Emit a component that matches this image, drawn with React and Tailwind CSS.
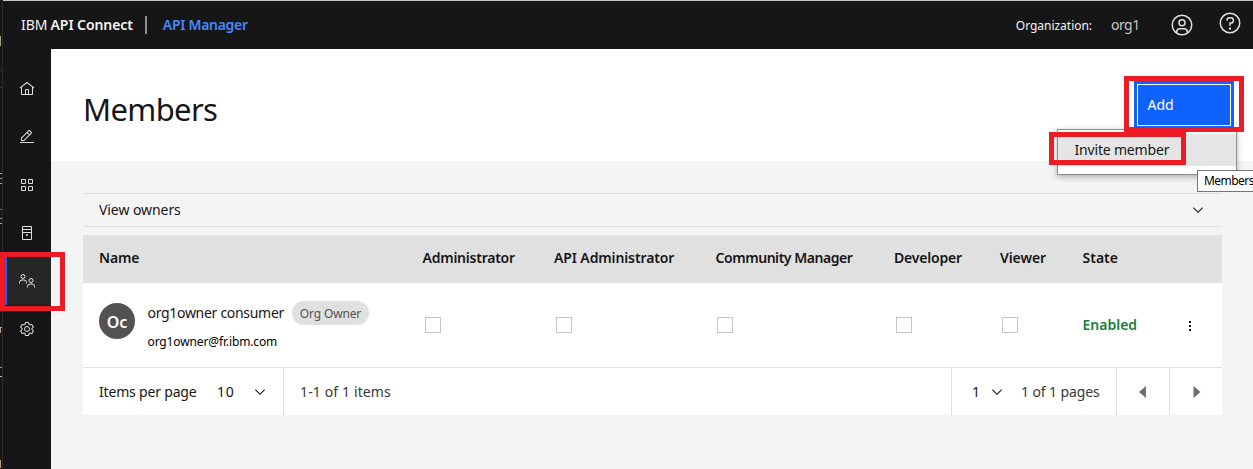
import React from 'react'

const GEAR =
  'M27,16.76c0-.25,0-.5,0-.76s0-.51,0-.77l1.92-1.68A2,2,0,0,0,29.3,11L26.94,7a2,2,0,0,0-1.73-1,2,2,0,0,0-.64.1l-2.43.82a11.35,11.35,0,0,0-1.31-.75l-.51-2.52a2,2,0,0,0-2-1.61H13.64a2,2,0,0,0-2,1.61l-.51,2.52a11.48,11.48,0,0,0-1.32.75L7.43,6.06A2,2,0,0,0,6.79,6,2,2,0,0,0,5.06,7L2.7,11a2,2,0,0,0,.41,2.51L5,15.24c0,.25,0,.5,0,.76s0,.51,0,.77L3.11,18.45A2,2,0,0,0,2.7,21L5.06,25a2,2,0,0,0,1.73,1,2,2,0,0,0,.64-.1l2.43-.82a11.35,11.35,0,0,0,1.31.75l.51,2.52a2,2,0,0,0,2,1.61h4.72a2,2,0,0,0,2-1.61l.51-2.52a11.48,11.48,0,0,0,1.32-.75l2.42.82a2,2,0,0,0,.64.1,2,2,0,0,0,1.73-1L29.3,21a2,2,0,0,0-.41-2.51ZM25.21,24l-3.43-1.16a8.86,8.86,0,0,1-2.71,1.57L18.36,28H13.64l-.71-3.55a9.36,9.36,0,0,1-2.7-1.57L6.79,24,4.43,20l2.72-2.4a8.9,8.9,0,0,1,0-3.13L4.43,12,6.79,8l3.43,1.16a8.86,8.86,0,0,1,2.71-1.57L13.64,4h4.72l.71,3.55a9.36,9.36,0,0,1,2.7,1.57L25.21,8,27.57,12l-2.72,2.4a8.9,8.9,0,0,1,0,3.13L27.57,20Z'

function Icon({ className = 'size-4', children }) {
  return (
    <svg viewBox="0 0 32 32" fill="currentColor" className={`shrink-0 ${className}`}>
      {children}
    </svg>
  )
}

const HomeIcon = () => (
  <Icon>
    <path d="M16.6123,2.2138a1.01,1.01,0,0,0-1.2427,0L1,13.4194l1.2427,1.5717L4,13.6209V26a2.0041,2.0041,0,0,0,2,2H26a2.0037,2.0037,0,0,0,2-2V13.63L29.7573,15,31,13.4282ZM18,26H14V18h4Zm2,0V18a2.0023,2.0023,0,0,0-2-2H14a2.002,2.002,0,0,0-2,2v8H6V12.0615l10-7.79,10,7.8005V26Z" />
  </Icon>
)
const EditIcon = () => (
  <Icon>
    <path d="M2 26H30V28H2z M25.4,9c0.8-0.8,0.8-2,0-2.8l-3.6-3.6c-0.8-0.8-2-0.8-2.8,0l-15,15V24h6.4L25.4,9z M20.4,4L24,7.6l-3,3L17.4,7L20.4,4z M6,22v-3.6l10-10l3.6,3.6l-10,10H6z" />
  </Icon>
)
const GridIcon = () => (
  <Icon>
    <g fill="none" stroke="currentColor" strokeWidth="2">
      <path d="M5 5h8v8H5z M19 5h8v8h-8z M5 19h8v8H5z M19 19h8v8h-8z" />
    </g>
  </Icon>
)
const CatalogIcon = () => (
  <Icon>
    <path d="M7 3h18v26H7z M7 9h18 M7 15h18" fill="none" stroke="currentColor" strokeWidth="2" />
    <circle cx="16" cy="20" r="2" />
  </Icon>
)
const MembersIcon = () => (
  <Icon>
    <g fill="none" stroke="currentColor" strokeWidth="2">
      <circle cx="8" cy="7" r="4" />
      <path d="M1 21v-2a5 5 0 0 1 5-5h4a5 5 0 0 1 5 5v2" />
      <circle cx="24" cy="15" r="4" />
      <path d="M17 29v-2a5 5 0 0 1 5-5h4a5 5 0 0 1 5 5v2" />
    </g>
  </Icon>
)
const SettingsIcon = () => (
  <Icon>
    <path d={GEAR} />
    <circle cx="16" cy="16" r="5" fill="none" stroke="currentColor" strokeWidth="2" />
  </Icon>
)
const Chevron = ({ className = '' }) => (
  <Icon className={`size-4 ${className}`}>
    <path d="M16 22L6 12 7.4 10.6 16 19.2 24.6 10.6 26 12z" />
  </Icon>
)

const nav = [HomeIcon, EditIcon, GridIcon, CatalogIcon, MembersIcon, SettingsIcon]

const columns = [
  ['Name', 'tracking-[-0.2px]'],
  ['Administrator', 'tracking-[-0.24px] pl-[0.5px]'],
  ['API Administrator', 'tracking-[-0.12px]'],
  ['Community Manager', 'tracking-[-0.45px] pl-[0.5px]'],
  ['Developer', 'tracking-[-0.2px]'],
  ['Viewer', 'tracking-[-0.1px]'],
  ['State', 'pl-[0.5px]'],
]

function Header() {
  return (
    <header className="flex h-[49px] shrink-0 items-center border-t border-[#c6c6c6] bg-[#161616] pl-[18px] text-sm text-[#f4f4f4]">
      <span>IBM</span>
      <span className="ml-[3px] font-semibold tracking-[-0.08px]">API Connect</span>
      <span className="ml-3 h-[18px] w-0.5 bg-[#8d8d8d]" />
      <span className="ml-4 font-semibold tracking-[-0.3px] text-[#4589ff]">API Manager</span>
      <span className="ml-auto pt-0.5 text-xs tracking-[-0.03px]">Organization:</span>
      <span className="ml-[19px] w-[30px] tracking-[-0.5px] text-[#c6c6c6]">org1</span>
      <Icon className="ml-[29px] size-6 text-[#e0e0e0]">
        <path d="M16,8a5,5,0,1,0,5,5A5,5,0,0,0,16,8Zm0,8a3,3,0,1,1,3-3A3.0034,3.0034,0,0,1,16,16Z" />
        <path d="M16,2A14,14,0,1,0,30,16,14.0158,14.0158,0,0,0,16,2ZM10,26.3765V25a3.0033,3.0033,0,0,1,3-3h6a3.0033,3.0033,0,0,1,3,3v1.3765a11.8989,11.8989,0,0,1-12,0Zm13.9925-1.4507A5.0016,5.0016,0,0,0,19,20H13a5.0016,5.0016,0,0,0-4.9925,4.9258,12,12,0,1,1,15.985,0Z" />
      </Icon>
      <Icon className="mr-[11px] mb-1 ml-6 size-6 text-[#e0e0e0]">
        <path d="M16,2A14,14,0,1,0,30,16,14,14,0,0,0,16,2Zm0,26A12,12,0,1,1,28,16,12,12,0,0,1,16,28Z" />
        <circle cx="16" cy="23.5" r="1.5" />
        <path d="M17,8H15.5A4.49,4.49,0,0,0,11,12.5V13h2v-.5A2.5,2.5,0,0,1,15.5,10H17a2.5,2.5,0,0,1,0,5H15v4.5h2V17a4.5,4.5,0,0,0,0-9Z" />
      </Icon>
    </header>
  )
}

function Sidebar() {
  return (
    <nav className="flex w-12 shrink-0 flex-col bg-[#161616] pt-4 text-[#e0e0e0]">
      {nav.map((Glyph, i) => (
        <div
          key={i}
          className={
            i === 4
              ? 'ml-0.5 flex h-12 items-center border-l-2 border-[#0f62fe] bg-[#262626] pl-3'
              : 'flex h-12 items-center pl-4'
          }
        >
          <Glyph />
        </div>
      ))}
    </nav>
  )
}

/* Strip of the neighbouring window visible along the left edge. */
function EdgeStrip() {
  return (
    <div className="flex w-[3px] shrink-0 flex-col border-r border-[#2b2b2b] bg-[#161616]">
      <span className="mt-9 h-2.5 w-px bg-[#b09a84]" />
      <span className="mt-6 h-px w-0.5 bg-[#303030]" />
      <span className="mt-4 h-px w-0.5 bg-[#303030]" />
      <span className="mt-[85px] h-px w-0.5 bg-[#b0a79c]" />
      <span className="mt-1 h-px w-0.5 bg-[#9aa3b0]" />
      <span className="mt-1 h-px w-0.5 bg-[#b0a79c]" />
      <span className="mt-[25px] h-px w-0.5 bg-[#4c6a8c]" />
      <span className="mt-2 h-px w-0.5 bg-[#8d9bb0]" />
      <span className="mt-1 h-px w-0.5 bg-[#b5b5b5]" />
      <span className="mt-[103px] h-px w-0.5 bg-[#b5a694]" />
      <span className="h-[5px] w-px bg-[#b09a84]" />
      <span className="mt-[34px] h-px w-0.5 bg-[#7aa0c0]" />
      <span className="mt-2 h-px w-0.5 bg-[#b5b5b5]" />
      <span className="mt-[83px] h-2 w-px bg-[#b09a84]" />
    </div>
  )
}

function MembersTable() {
  return (
    <section className="mt-2 text-sm">
      <div className="grid h-12 grid-cols-[323px_132px_161px_179px_106px_82px_1fr] items-center bg-[#e0e0e0] pb-0.5 pl-4 font-semibold">
        {columns.map(([label, tracking]) => (
          <span key={label} className={`whitespace-nowrap ${tracking}`}>
            {label}
          </span>
        ))}
      </div>
      <div className="grid h-[84px] grid-cols-[323px_132px_161px_179px_106px_82px_1fr] grid-rows-[84px] items-center bg-white pl-4">
        <div className="flex h-full items-start">
          <span className="mt-5 flex size-9 items-center justify-center rounded-full bg-[#525252] pt-0.5 text-base leading-none font-semibold text-white">
            Oc
          </span>
          <div className="ml-[12.5px] flex flex-col">
            <div className="mt-[18px] flex h-6 items-center">
              <span className="w-[136.5px] whitespace-nowrap tracking-[-0.3px]">org1owner consumer</span>
              <span className="ml-2 flex h-6 w-[77px] items-center justify-center rounded-full bg-[#e0e0e0] pt-0.5 text-xs tracking-[-0.15px] text-[#525252]">
                Org Owner
              </span>
            </div>
            <span className="mt-[9px] text-xs tracking-[-0.13px] text-black">org1owner@fr.ibm.com</span>
          </div>
        </div>
        {columns.slice(1, 6).map(([label], i) => (
          <span key={label} className={`size-4 border border-[#c6c6c6] ${i === 0 ? 'ml-[3px]' : 'ml-0.5'}`} />
        ))}
        <div className="flex items-center justify-between pr-6">
          <span className="pl-[0.5px] font-semibold text-[#198038]">Enabled</span>
          <Icon className="mt-0.5 size-4">
            <path d="M14 6h4v4h-4z M14 14h4v4h-4z M14 22h4v4h-4z" />
          </Icon>
        </div>
      </div>
      <div className="flex h-12 items-stretch border-t border-[#e0e0e0] bg-white">
        <div className="flex w-[201px] items-center border-r border-[#e0e0e0] pl-4">
          <span className="w-[118px] tracking-[-0.18px]">Items per page</span>
          <span className="tracking-[0.8px]">10</span>
          <Chevron className="ml-[17px]" />
        </div>
        <span className="self-center pl-4 tracking-[0.13px] text-[#393939]">1-1 of 1 items</span>
        <div className="ml-auto flex w-[166px] items-center border-r border-l border-[#e0e0e0] pl-5">
          <span>1</span>
          <Chevron className="ml-[9px]" />
          <span className="ml-4 whitespace-nowrap tracking-[-0.1px] text-[#393939]">1 of 1 pages</span>
        </div>
        <div className="flex w-[53px] items-center justify-center border-r border-[#e0e0e0] text-[#6f6f6f]">
          <Icon>
            <path d="M8 16L22 4v24z" />
          </Icon>
        </div>
        <div className="flex w-[52px] items-center justify-center text-[#6f6f6f]">
          <Icon>
            <path d="M25 16L11 4v24z" />
          </Icon>
        </div>
      </div>
    </section>
  )
}

function Overlays() {
  return (
    <>
      <div className="absolute top-[129px] left-[1057px] h-[46px] w-[180px] border border-[#8d8d8d] bg-white pt-1 shadow-[0_2px_6px_rgba(0,0,0,0.3)]">
        <div className="flex h-8 items-center bg-[#e5e5e5] pl-[16.5px] text-sm tracking-[-0.18px]">Invite member</div>
      </div>
      <div className="absolute top-[170px] left-[1197px] flex h-[22px] w-14 items-center border border-r-0 border-[#767676] bg-white pl-1.5 text-xs tracking-[-0.55px] text-black">
        Members
      </div>
      <div className="absolute top-[76px] left-[1124px] h-14 w-[120px] border-5 border-[#ed1c24]" />
      <div className="absolute top-[132px] left-[1049px] h-[33px] w-[137px] border-5 border-[#ed1c24]" />
      <div className="absolute top-[252px] left-0 h-[59px] w-[65px] border-5 border-[#ed1c24]" />
    </>
  )
}

export default function App() {
  return (
    <div className="relative flex h-[469px] w-[1253px] overflow-hidden bg-[#f4f4f4] font-['Noto_Sans',sans-serif] text-[#161616]">
      <EdgeStrip />
      <div className="flex min-w-0 flex-1 flex-col">
        <Header />
        <div className="flex min-h-0 flex-1">
          <Sidebar />
          <main className="min-w-0 flex-1">
            <div className="flex h-28 items-start justify-between bg-white pr-[19px] pl-8">
              <h1 className="mt-10 text-[31px] leading-10 tracking-[-0.65px]">Members</h1>
              <button className="mt-8 h-[47px] w-[100px] bg-[#0f62fe] p-[3px] text-left text-sm text-white">
                <span className="flex h-[42px] w-[94px] items-center border border-white pl-[9.5px]">Add</span>
              </button>
            </div>
            <div className="pt-8 pr-[31px] pl-8">
              <div className="flex h-[34px] items-center justify-between border-y border-[#e0e0e0] pr-4 pl-4 text-sm tracking-[-0.07px]">
                <span>View owners</span>
                <Chevron />
              </div>
              <MembersTable />
            </div>
          </main>
        </div>
      </div>
      <Overlays />
    </div>
  )
}
